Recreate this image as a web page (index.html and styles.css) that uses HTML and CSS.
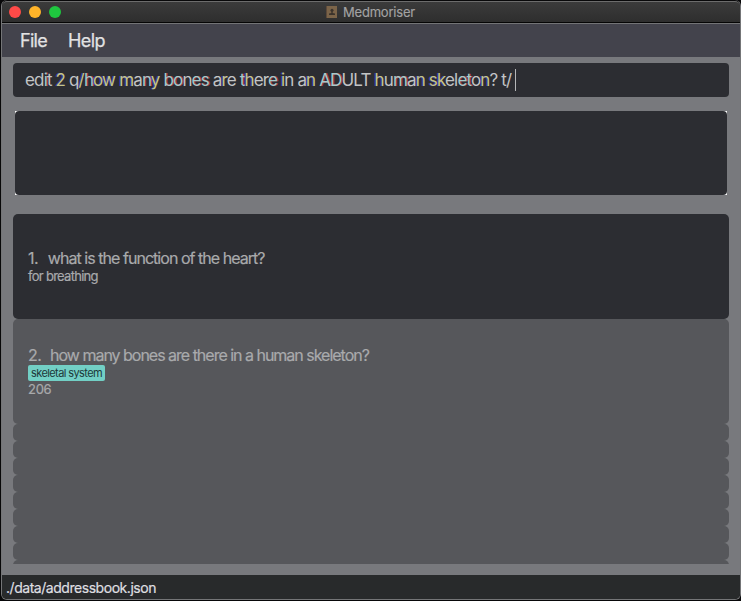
FILE: index.html
```html
<!DOCTYPE html>
<html lang="en">
<head>
<meta charset="utf-8">
<title>Medmoriser</title>
<link rel="stylesheet" href="styles.css">
</head>
<body>
<div class="window">
  <header class="titlebar">
    <div class="lights"><i class="close"></i><i class="minimise"></i><i class="zoom"></i></div>
    <div class="title">
      <svg width="11" height="12" viewBox="0 0 11 12"><rect width="11" height="12" fill="#7b6449"/><rect width="1" height="12" fill="#5d4a3a"/><circle cx="6" cy="4.300" r="1.500" fill="#3b332c"/><path d="M5.300 5h1.400v2L9 7.500V9H3V7.500L5.300 7z" fill="#3b332c"/></svg>
      <span>Medmoriser</span>
    </div>
  </header>
  <nav class="menu"><span class="file">File</span><span class="help">Help</span></nav>
  <main>
    <div class="command"><span class="entry">ed<b class="c">i</b>t <b class="y">2</b> q<b class="y">/</b><b class="c">h</b><b class="y">ow</b> <b class="y">m</b>a<b class="c">n</b><b class="y">y</b> <b class="c">bo</b>n<b class="c">es</b> a<b class="y">r</b>e <b class="c">t</b><b class="y">h</b>er<b class="c">e</b> <b class="y">i</b>n a<b class="y">n</b> <b class="c">AD</b>ULT <b class="y">h</b>u<b class="c">m</b>a<b class="y">n</b> <b class="y">sk</b>el<b class="c">et</b>o<b class="y">n</b>? t/</span><span class="caret"></span></div>
    <div class="result"></div>
    <div class="list">
      <section class="card first">
        <h2><span>1.</span><span class="q1">what is the function of the heart?</span></h2>
        <p class="a1">for breathing</p>
      </section>
      <section class="card">
        <h2><span>2.</span><span class="q2">how many bones are there in a human skeleton?</span></h2>
        <div class="tag"><span>skeletal system</span></div>
        <p class="a2">206</p>
      </section>
      <div class="row"></div><div class="row"></div><div class="row"></div><div class="row"></div>
      <div class="row"></div><div class="row"></div><div class="row"></div><div class="row"></div><div class="row"></div>
    </div>
  </main>
  <footer><span>./data/addressbook.json</span></footer>
</div>
</body>
</html>
```
FILE: styles.css
```css
* { box-sizing: border-box; }
body { margin: 0; background: #080809; font-family: Inter, "Liberation Sans", sans-serif; }
.window {
  width: 740px; height: 600px; margin: 0 0 0 1px; padding-top: 1px;
  display: flex; flex-direction: column; overflow: hidden;
  border: 1px solid #747577; border-width: 0 1px 1px; border-radius: 6px;
  white-space: nowrap;
}
.titlebar {
  height: 22px; flex: none; display: grid; align-items: center;
  border-top: 1px solid #6c6c6c; border-bottom: 1px solid #050505; border-radius: 5px 5px 0 0;
  background: linear-gradient(#3b3b3b, #2e2e2e);
}
.titlebar > * { grid-area: 1 / 1; }
.lights { display: flex; gap: 8px; padding-left: 7px; }
.lights i { width: 12px; height: 12px; border-radius: 50%; }
.close { background: #ff4a48; }
.minimise { background: #ffb429; }
.zoom { background: #1fc63f; }
.title { display: flex; align-items: center; gap: 6px; padding-left: 324px; font-size: 13px; letter-spacing: -.2px; color: #a3a3a3; -webkit-text-stroke: .15px #a3a3a3; }
.menu {
  height: 34px; flex: none; display: flex; align-items: center; gap: 21px; padding-left: 18px;
  border-top: 1px solid #737476; background: #43434c;
  font-size: 18px; color: #e2e2e3; -webkit-text-stroke: .25px #e2e2e3;
}
.file, .help { letter-spacing: -.7px; }
.help { letter-spacing: -.6px; }
main { height: 518px; flex: none; padding: 6px 11px 0; background: #78797d; }
.command {
  height: 34px; display: flex; align-items: center; padding-left: 12px;
  border-radius: 4px; background: #2c2d32; color: #c3c4c6; font-size: 17px;
}
.entry { letter-spacing: -.85px; }
.entry b { font-weight: inherit; }
.y { color: #c4c48a; text-shadow: -1px 0 #3b36b5; }
.c { color: #a6caca; text-shadow: 1px 0 #b13447; }
.caret { width: 1px; height: 22px; margin-left: 4px; background: #b5b6b8; }
.result {
  height: 84px; margin: 14px 2px 19px; overflow: hidden; background: #fff;
}
.result::before { content: ""; display: block; height: 100%; border-radius: 4px; background: #2c2d32; }
.list { height: 350px; overflow: hidden; }
.card { height: 105px; padding: 27px 15px 0; border-radius: 5px; background: #56575b; color: #a9aaac; -webkit-text-stroke: .2px; }
.card.first { padding-top: 35px; background: #2c2d32; }
.card h2 { display: flex; gap: 8.5px; margin: 0; height: 19px; line-height: 19px; font-size: 16px; font-weight: 400; letter-spacing: -.4px; }
.first h2 { gap: 9.5px; }
.q1 { letter-spacing: -.96px; }
.q2 { letter-spacing: -1.01px; }
.card p { margin: 0; font-size: 13px; line-height: 17px; letter-spacing: -.3px; }
.card .a1 { letter-spacing: -.72px; }
.tag { width: 77px; height: 16px; padding-left: 3px; border-radius: 2px; background: #72cfc5; color: #20383a; font-size: 11px; line-height: 16px; letter-spacing: -.6px; -webkit-text-stroke: 0; }
.row { height: 17px; border-radius: 5px; background: #56575b; }
footer { height: 25px; flex: none; padding-left: 4px; background: #282a2b; color: #dfdfe0; font-size: 14px; line-height: 26px; letter-spacing: -.46px; -webkit-text-stroke: .2px; }
```
